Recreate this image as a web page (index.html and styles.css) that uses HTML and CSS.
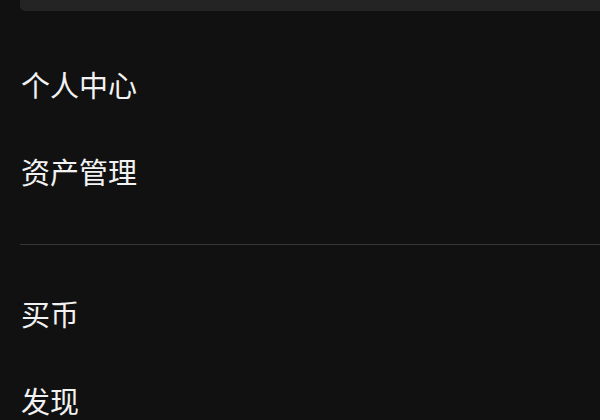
FILE: index.html
```html
<!DOCTYPE html>
<html lang="zh">
<head>
<meta charset="utf-8">
<link rel="stylesheet" href="styles.css">
</head>
<body>
<div class="page">
  <div class="topbar"></div>
  <nav class="menu">
    <div class="group first">
      <div class="item">个人中心</div>
      <div class="item">资产管理</div>
    </div>
    <div class="divider"></div>
    <div class="group">
      <div class="item">买币</div>
      <div class="item">发现</div>
    </div>
  </nav>
</div>
</body>
</html>
```

FILE: styles.css
```css
html, body {
  margin: 0;
  padding: 0;
  background: #111111;
  overflow: hidden;
}
.page {
  width: 600px;
  height: 420px;
  padding-left: 20px;
  box-sizing: border-box;
  font-family: "Noto Sans CJK SC", "Noto Sans", sans-serif;
  color: #f2f2f2;
  overflow: hidden;
}
.topbar {
  height: 11px;
  background: #242424;
  border-bottom-left-radius: 5px;
}
.menu {
  display: flex;
  flex-direction: column;
}
.group.first {
  margin-top: 30px;
}
.item {
  height: 87px;
  line-height: 87px;
  font-size: 29px;
  font-weight: 400;
  padding-left: 1px;
}
.divider {
  margin-top: 29px;
  margin-bottom: 25px;
  height: 1px;
  background: #363636;
}
```
